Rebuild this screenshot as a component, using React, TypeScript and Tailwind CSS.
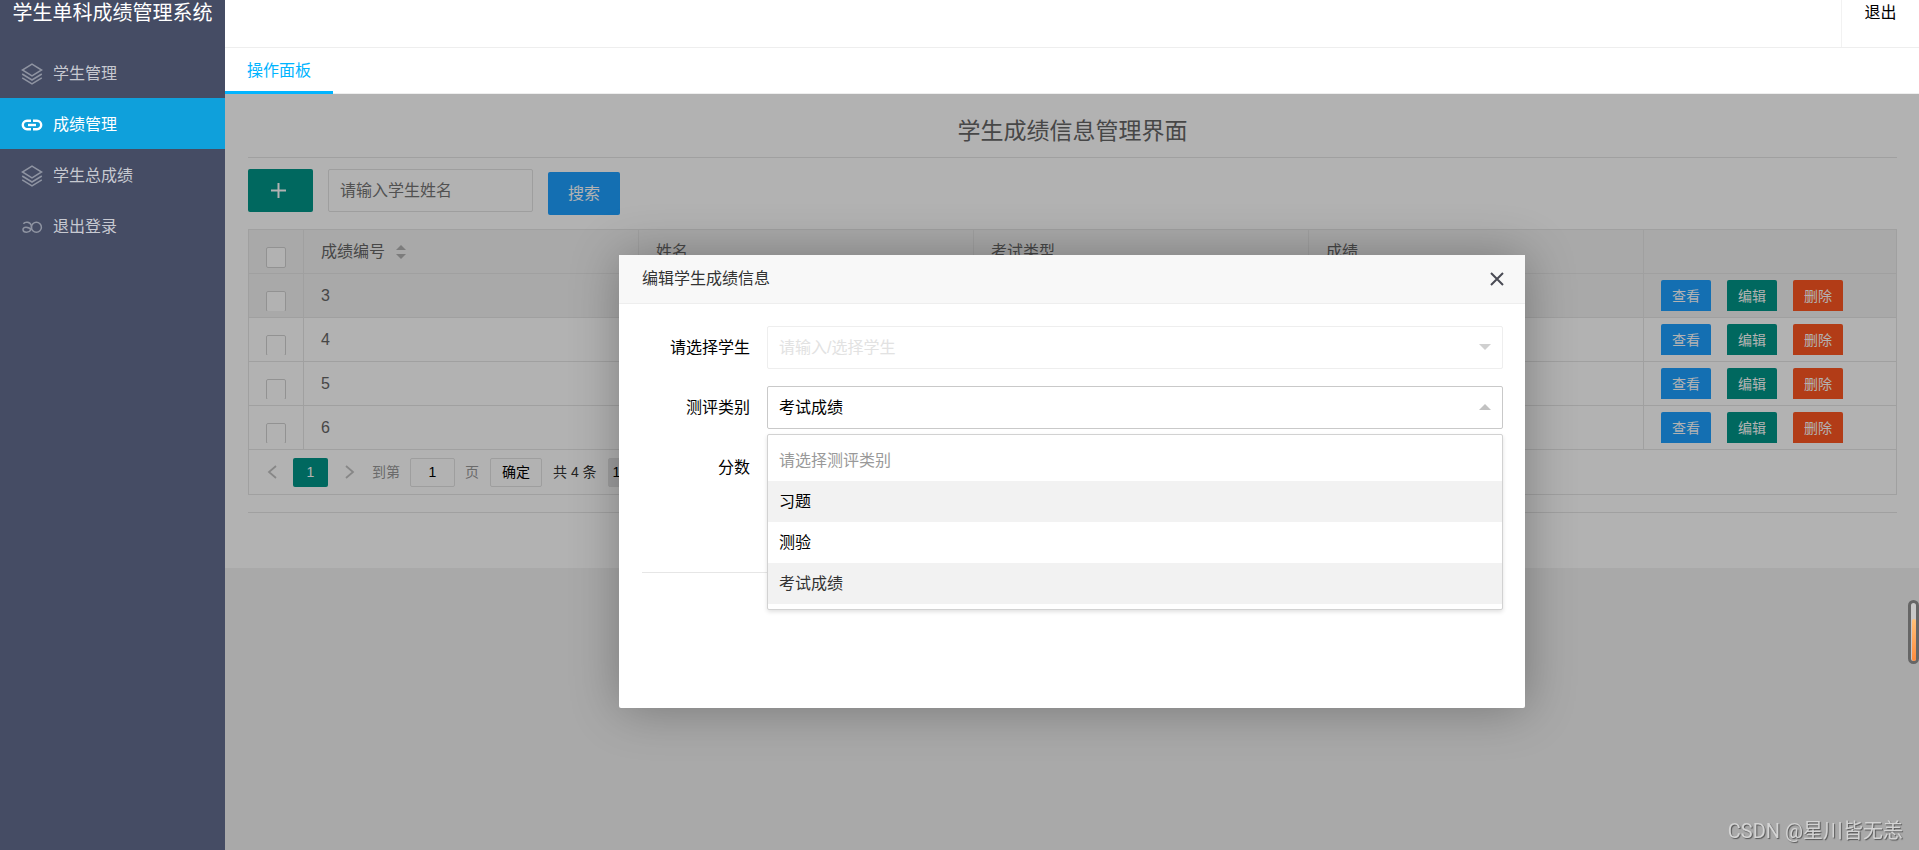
import React from 'react'

interface MenuItem {
  label: string
  icon: 'layers' | 'link' | 'infinity'
  active?: boolean
}

const menuItems: MenuItem[] = [
  { label: '学生管理', icon: 'layers' },
  { label: '成绩管理', icon: 'link', active: true },
  { label: '学生总成绩', icon: 'layers' },
  { label: '退出登录', icon: 'infinity' },
]

const rows = [3, 4, 5, 6]

const categories = [
  { label: '请选择测评类别', style: 'text-[#999]' },
  { label: '习题', style: 'bg-[#f2f2f2] text-black' },
  { label: '测验', style: 'text-black' },
  { label: '考试成绩', style: 'bg-[#f2f2f2] text-[#333]' },
]

function MenuIcon({ icon }: { icon: MenuItem['icon'] }) {
  if (icon === 'layers') {
    return (
      <svg viewBox="0 0 22 22" className="size-[22px]" fill="none" stroke="currentColor" strokeWidth="1.5">
        <path d="M11 1.2 20.6 7 11 12.8 1.4 7Z" />
        <path d="M1.2 11 11 17l9.8-6" />
        <path d="M1.2 14.8 11 20.8l9.8-6" />
      </svg>
    )
  }
  if (icon === 'link') {
    return (
      <svg viewBox="0 0 22 22" className="size-[22px]" fill="none" stroke="currentColor" strokeWidth="2.4">
        <path d="M10 6.8H6a4.2 4.2 0 0 0 0 8.4h4" />
        <path d="M12 6.8h4a4.2 4.2 0 0 1 0 8.4h-4" />
        <path d="M7 11h8" />
      </svg>
    )
  }
  return (
    <svg viewBox="0 0 22 22" className="size-[22px]" fill="none" stroke="currentColor" strokeWidth="1.5">
      <circle cx="15.4" cy="11.2" r="5" />
      <path d="M2.4 7.8C3.8 5.8 8.8 5.4 10.2 9.2c1 3-.4 7-4.6 7-4.6 0-4.8-5-.6-5 2.6 0 4.2 1.2 5.4 3" />
    </svg>
  )
}

function Sidebar() {
  return (
    <aside className="w-[225px] shrink-0 bg-[#454c64]">
      <h1 className="h-[47px] text-center text-xl leading-[26px] whitespace-nowrap text-white">学生单科成绩管理系统</h1>
      <nav>
        {menuItems.map((item) => (
          <a
            key={item.label}
            href="#"
            className={`flex h-[51px] items-center gap-[10px] pt-[2px] pl-[21px] text-base ${
              item.active ? 'bg-[#0fa0db] text-white' : 'text-[#c7c9d1]'
            }`}
          >
            <span className={item.active ? 'text-white' : 'text-[#8f94a2]'}>
              <MenuIcon icon={item.icon} />
            </span>
            {item.label}
          </a>
        ))}
      </nav>
    </aside>
  )
}

function RowActions() {
  const base = 'h-[31px] w-[50px] rounded-t-xs text-sm text-white'
  return (
    <div className="flex gap-4 pl-[17px]">
      <button className={`${base} bg-[#1e9fff]`}>查看</button>
      <button className={`${base} bg-[#009688]`}>编辑</button>
      <button className={`${base} bg-[#ff5722]`}>删除</button>
    </div>
  )
}

function ScoreTable() {
  const cell = 'h-11 border-r border-b border-[#e6e6e6] p-0 text-left font-normal'
  const lastCell = 'h-11 border-b border-[#e6e6e6] p-0'
  const checkbox = 'block h-[21px] w-5 appearance-none rounded-xs border border-[#d2d2d2] bg-white'

  return (
    <table className="w-full table-fixed border-separate border-spacing-0 text-base text-[#666]">
      <colgroup>
        <col className="w-[55px]" />
        <col />
        <col />
        <col />
        <col />
        <col className="w-[252px]" />
      </colgroup>
      <thead>
        <tr className="bg-[#f2f2f2]">
          <th className={cell}>
            <div className="h-[43px] pt-[17px] pl-[17px]">
              <input type="checkbox" aria-label="全选" className={checkbox} />
            </div>
          </th>
          <th className={cell}>
            <div className="flex items-center gap-[11px] pl-[17px]">
              成绩编号
              <svg viewBox="0 0 10 14" className="h-[14px] w-[10px]" fill="#b2b2b2">
                <path d="M5 0 10 5H0Z" />
                <path d="M0 9h10L5 14Z" />
              </svg>
            </div>
          </th>
          <th className={cell}>
            <div className="pl-[17px]">姓名</div>
          </th>
          <th className={cell}>
            <div className="pl-[17px]">考试类型</div>
          </th>
          <th className={cell}>
            <div className="pl-[17px]">成绩</div>
          </th>
          <th className={lastCell} />
        </tr>
      </thead>
      <tbody>
        {rows.map((id, i) => (
          <tr key={id} className={i === 0 ? 'bg-[#f2f2f2]' : ''}>
            <td className={cell}>
              <div className="mt-[11px] ml-[17px] h-5 overflow-hidden">
                <input type="checkbox" aria-label={`选择 ${id}`} className={checkbox} />
              </div>
            </td>
            <td className={cell}>
              <div className="pl-[17px]">{id}</div>
            </td>
            <td className={cell} />
            <td className={cell} />
            <td className={cell} />
            <td className={lastCell}>
              <RowActions />
            </td>
          </tr>
        ))}
      </tbody>
    </table>
  )
}

function Pager() {
  return (
    <div className="flex h-11 items-center text-sm text-[#999]">
      <button aria-label="上一页" className="ml-[18px] text-[#c2c2c2]">
        <svg viewBox="0 0 10 14" className="h-[14px] w-[10px]" fill="none" stroke="currentColor" strokeWidth="1.8">
          <path d="M9 1 2 7l7 6" />
        </svg>
      </button>
      <button className="ml-4 h-[29px] w-[35px] rounded-xs bg-[#009688] text-white">1</button>
      <button aria-label="下一页" className="ml-[17px] text-[#c2c2c2]">
        <svg viewBox="0 0 10 14" className="h-[14px] w-[10px]" fill="none" stroke="currentColor" strokeWidth="1.8">
          <path d="m1 1 7 6-7 6" />
        </svg>
      </button>
      <label className="ml-[17px] flex items-center gap-[10px]">
        到第
        <input
          defaultValue="1"
          className="h-[29px] w-[45px] rounded-xs border border-[#e2e2e2] bg-white text-center text-black"
        />
        页
      </label>
      <button className="ml-[11px] h-[29px] w-[52px] rounded-xs border border-[#e2e2e2] bg-white text-black">
        确定
      </button>
      <span className="ml-[11px] text-[#333]">共 4 条</span>
      <select
        aria-label="每页条数"
        className="ml-[11px] h-[29px] w-[90px] appearance-none rounded-xs border border-[#e2e2e2] bg-[#e4e4e6] px-1 text-black"
      >
        <option>10 条/页</option>
      </select>
    </div>
  )
}

function Arrow({ up }: { up?: boolean }) {
  return (
    <svg
      viewBox="0 0 12 6"
      className="pointer-events-none absolute top-[18px] right-3 h-[6px] w-3"
      fill={up ? '#c2c2c2' : '#d0d0d0'}
    >
      <path d={up ? 'M6 0 12 6H0Z' : 'M0 0h12L6 6Z'} />
    </svg>
  )
}

function EditDialog() {
  const label = 'w-[108px] shrink-0 text-right'
  const field = 'h-[43px] w-full appearance-none rounded-xs border bg-white pl-[11px] text-base disabled:opacity-100'

  return (
    <div
      role="dialog"
      aria-label="编辑学生成绩信息"
      className="h-[453px] w-full max-w-[906px] rounded-xs bg-white text-base text-black shadow-[1px_1px_50px_rgba(0,0,0,0.3)]"
    >
      <div className="flex h-[49px] items-center justify-between border-b border-[#eee] bg-[#f8f8f8] pr-[21px] pl-[23px]">
        <h3 className="text-[#333]">编辑学生成绩信息</h3>
        <button aria-label="关闭">
          <svg viewBox="0 0 14 14" className="size-[14px]" stroke="#4a4b55" strokeWidth="2">
            <path d="m1 1 12 12M13 1 1 13" />
          </svg>
        </button>
      </div>
      <form className="pt-[22px] pr-[22px] pl-[23px]">
        <div className="flex flex-col gap-[17px]">
          <div className="flex items-center gap-[17px]">
            <label htmlFor="student" className={label}>
              请选择学生
            </label>
            <div className="relative flex-1">
              <select id="student" disabled className={`${field} border-[#eee] text-[#e2e2e2]`}>
                <option>请输入/选择学生</option>
              </select>
              <Arrow />
            </div>
          </div>
          <div className="flex items-center gap-[17px]">
            <label htmlFor="category" className={label}>
              测评类别
            </label>
            <div className="relative flex-1">
              <select id="category" className={`${field} border-[#c9c9c9]`}>
                <option>考试成绩</option>
              </select>
              <Arrow up />
              <ul
                role="listbox"
                className="absolute top-12 left-0 z-10 w-full rounded-xs border border-[#d2d2d2] bg-white py-[5px] shadow-[0_2px_4px_rgba(0,0,0,0.12)]"
              >
                {categories.map((c) => (
                  <li key={c.label} role="option" className={`h-[41px] pl-[11px] leading-[41px] ${c.style}`}>
                    {c.label}
                  </li>
                ))}
              </ul>
            </div>
          </div>
          <div className="flex items-center gap-[17px]">
            <label htmlFor="score" className={label}>
              分数
            </label>
            <input id="score" className={`${field} border-[#eee]`} />
          </div>
        </div>
        <hr className="mt-[83px] border-[#e6e6e6]" />
      </form>
    </div>
  )
}

export default function App() {
  return (
    <div className="flex min-h-screen bg-white font-['Liberation_Sans','Noto_Sans_CJK_SC',sans-serif]">
      <Sidebar />
      <div className="flex min-w-0 flex-1 flex-col">
        <header className="flex h-12 justify-end border-b border-[#eee]">
          <a href="#" className="w-[78px] border-l border-[#f2f2f2] text-center text-base leading-[26px] text-black">
            退出
          </a>
        </header>
        <div className="flex h-[46px] border-b border-[#eee]">
          <button className="-mb-px w-[108px] border-b-[3px] border-[#00b4ff] pt-[2px] text-base text-[#00b4ff]">
            操作面板
          </button>
        </div>

        <main className="relative flex-1 bg-[#f2f2f2]">
          <section className="bg-white pt-5 pr-[22px] pb-[55px] pl-[23px] text-[#666]">
            <h2 className="text-center text-[23px] leading-[34px]">学生成绩信息管理界面</h2>
            <hr className="mt-[9px] border-[#e6e6e6]" />
            <div className="mt-[11px] flex h-[46px] items-start gap-[15px]">
              <button aria-label="添加" className="flex h-[43px] w-[65px] items-center justify-center rounded-xs bg-[#009688] pr-1">
                <svg viewBox="0 0 15 15" className="size-[15px]" stroke="#fff" strokeWidth="2">
                  <path d="M7.5 0v15M0 7.5h15" />
                </svg>
              </button>
              <input
                placeholder="请输入学生姓名"
                aria-label="学生姓名"
                className="h-[43px] w-[205px] rounded-xs border border-[#e2e2e2] bg-white pl-[11px] text-base placeholder:text-[#757575]"
              />
              <button className="h-[43px] w-[72px] self-end rounded-xs bg-[#1e9fff] text-base text-white">搜索</button>
            </div>
            <div className="mt-[14px] border border-[#e6e6e6]">
              <ScoreTable />
              <Pager />
            </div>
            <hr className="mt-[17px] border-[#e6e6e6]" />
          </section>

          <div className="absolute inset-0 flex items-start justify-center bg-black/30 pt-[161px]">
            <EditDialog />
          </div>
        </main>
      </div>

      <div className="fixed top-[600px] right-0 flex h-16 w-[11px] items-end justify-center rounded-full border-[3px] border-[#666] bg-[#c8c8c8]">
        <div className="h-[42px] w-1 rounded-full bg-linear-to-b from-[#ffc078] to-[#ff8a3c]" />
      </div>
      <div className="fixed right-4 bottom-1 font-['Roboto','Noto_Sans_CJK_SC',sans-serif] text-xl leading-[30px] text-[#d4d4d4] [text-shadow:1px_1px_1px_#555]">
        CSDN @星川皆无恙
      </div>
    </div>
  )
}
